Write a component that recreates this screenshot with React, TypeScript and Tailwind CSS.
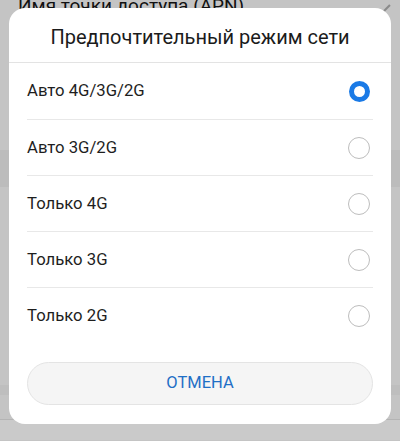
import { useState } from 'react';

const OPTIONS = ['Авто 4G/3G/2G', 'Авто 3G/2G', 'Только 4G', 'Только 3G', 'Только 2G'];

function Radio({ checked }: { checked: boolean }) {
  return checked ? (
    <span className="block h-[21px] w-[21px] rounded-full border-[5px] border-[#1a7ae6] bg-white" />
  ) : (
    <span className="block h-[22px] w-[22px] rounded-full border border-[#bdbdbd] bg-white" />
  );
}

export default function App() {
  const [mode, setMode] = useState(0);

  return (
    <div
      className="relative h-[441px] w-[400px] overflow-hidden bg-[#c4c4c4]"
      style={{ fontFamily: 'Roboto, "Noto Sans", sans-serif' }}
    >
      {/* фон: список настроек за диалогом */}
      <div className="flex flex-col">
        <div className="-mt-[14px] flex h-[40px] items-center justify-between pl-[18px] pr-[14px] text-[19px] text-[#111]">
          <span>Имя точки доступа (APN)</span>
          <span className="mt-[8px] block h-[14px] w-[2px] rotate-45 bg-[#8a8a8a]" />
        </div>
        <div className="h-[124px]" />
        <div className="h-[37px] bg-[#bcbcbc]" />
        <div className="h-[198px]" />
        <div className="h-[10px] bg-[#bebebe]" />
        <div className="flex h-[24px] items-end pl-[18px] text-[18px] leading-none text-[#111]">Дополнительно</div>
        <div className="h-[1px] bg-[#b4b4b4]" />
        <div className="h-[20px] bg-[#cacaca]" />
      </div>

      {/* диалог */}
      <div className="absolute left-[9px] top-[8px] flex h-[416px] w-[382px] flex-col rounded-[16px] bg-white">
        <div className="flex h-[54px] items-center justify-center pt-[3px] text-[20px] text-[#1b1b1b]">
          Предпочтительный режим сети
        </div>
        <div className="h-[1px] bg-[#e3e3e3]" />

        <div className="flex flex-col">
          {OPTIONS.map((label, i) => (
            <div key={label} className="flex flex-col">
              {i > 0 && <div className="mx-[18px] h-[1px] bg-[#e8e8e8]" />}
              <button
                type="button"
                onClick={() => setMode(i)}
                className={`mx-[18px] flex items-center justify-between text-left ${i > 0 ? 'h-[55px]' : 'h-[56px]'}`}
              >
                <span className="text-[16.7px] text-[#1e1e1e]">{label}</span>
                <span className="mr-[3px]">
                  <Radio checked={mode === i} />
                </span>
              </button>
            </div>
          ))}
        </div>

        <div className="px-[18px] pt-[19px]">
          <button
            type="button"
            className="flex h-[43px] w-full items-center justify-center rounded-full border border-[#e4e4e4] bg-[#f5f5f5] text-[16.5px] text-[#1f6fc6]"
          >
            ОТМЕНА
          </button>
        </div>
      </div>
    </div>
  );
}
